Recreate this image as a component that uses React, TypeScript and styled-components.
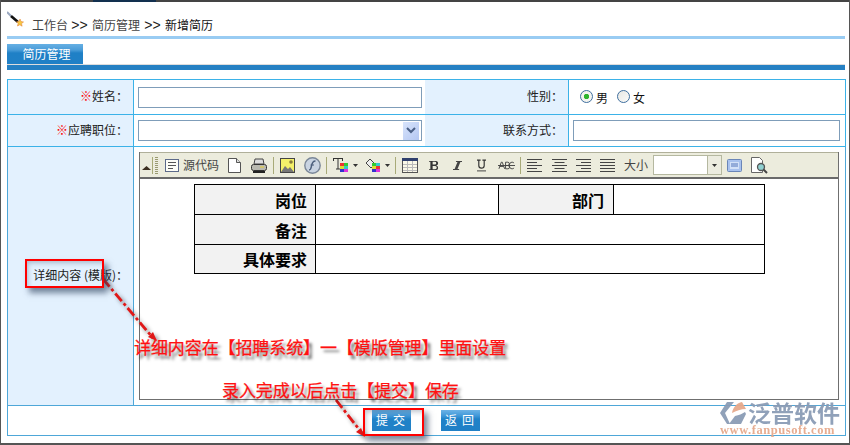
import React from "react";
import styled, { createGlobalStyle } from "styled-components";

const Global = createGlobalStyle`
  html, body { margin: 0; padding: 0; background: #fff; }
  body { font: 12px "Noto Sans CJK SC", "Liberation Sans", sans-serif; color: #222; }
  * { box-sizing: border-box; }
`;

const Frame = styled.div`
  position: relative; width: 850px; height: 445px; overflow: hidden; background: #fff;
  border-left: 1px solid #555; border-right: 1px solid #555; border-bottom: 2px solid #555;
`;
const TopStrip = styled.div`
  height: 2px; background: #444; margin: 0 -1px; padding-left: 93px;
`;
const TopTab = styled.div`width: 63px; height: 2px; background: #12304f;`;
const Content = styled.div`padding: 0 4px 0 6px;`;
const Crumbs = styled.div`
  height: 34px; display: flex; align-items: flex-end; padding-bottom: 2px; line-height: 18px; color: #444;
`;
const WandBox = styled.svg`width: 17px; height: 17px; margin: 0 8px 6px 0; flex: none;`;
const CrumbLink = styled.span<{ $cur?: boolean; $w: number }>`
  width: ${p => p.$w}px; white-space: nowrap; color: ${p => (p.$cur ? "#111" : "#444")};
`;
const CrumbSep = styled.span`
  width: 25px; text-align: center; color: #222; font-family: "Liberation Sans", sans-serif; font-size: 14px; line-height: 17px;
`;
const Rule = styled.div`height: 3px; background: #99ccf3;`;
const Tab = styled.div`
  width: 76px; height: 20px; margin-top: 5px; padding-left: 3px; color: #fff; text-align: center; line-height: 20px;
  background: linear-gradient(#66b0e4 0, #4a9cd8 6px, #1f80c6 9px, #2080c6 100%);
`;
const TabBar = styled.div`
  height: 6px; background: #2580c3; border-top: 1px solid #ddd; margin-bottom: 9px;
`;

const Form = styled.table`
  width: 838px; height: 357px; border-collapse: collapse; table-layout: fixed;
`;
const Row = styled.tr<{ $h: number }>`height: ${p => p.$h}px;`;
const Label = styled.td<{ $dark?: boolean }>`
  background: #e3f1fe; text-align: right; padding: 0 5px 3px 0; color: #222;
  border: 1px solid ${p => (p.$dark ? "#4ea7d8" : "#3bb2e8")};
`;
const Label2 = styled(Label)`border-left: 0;`;
const Field = styled.td<{ $dark?: boolean; $nr?: boolean }>`
  padding: 0 4px; background: #fff;
  border: 1px solid ${p => (p.$dark ? "#4ea7d8" : "#3bb2e8")};
  ${p => (p.$nr ? "border-right: 0;" : "")}
`;
const EditorCell = styled(Field)`padding: 5px 6px 5px 5px; vertical-align: top;`;
const Star = styled.span`color: #f00;`;
const TextInput = styled.div<{ $w: number }>`
  width: ${p => p.$w}px; height: 21px; border: 1px solid #7f9db9; background: #fff;
`;
const SelectBox = styled(TextInput)`display: flex; justify-content: flex-end; align-items: center; padding: 0 2px 0 0;`;
const SelectBtn = styled.div`
  width: 16px; height: 18px; background: linear-gradient(135deg, #d8e4fb, #b4c7f2); display: flex; align-items: center; justify-content: center;
`;
const RadioRow = styled.div`display: flex; align-items: center; padding: 0 0 1px 7px; color: #111;`;
const Radio = styled.span<{ $on?: boolean; $ml?: number }>`
  width: 13px; height: 13px; border-radius: 50%; border: 1px solid #3f6f9f; flex: none; margin-left: ${p => p.$ml || 0}px;
  background: ${p => (p.$on ? "radial-gradient(circle, #2fb52f 0 2.4px, #f4f4f0 3px)" : "linear-gradient(135deg, #e8e8e4, #fbfbf9)")};
`;
const RadioText = styled.span`margin-left: 3px; width: 11px; line-height: 14px; margin-top: 2px;`;

const Editor = styled.div`
  width: 700px; height: 248px; border: 1px solid #6f6f6f; border-top: 0;
`;
const Toolbar = styled.div`
  height: 27px; display: flex; align-items: center; background: #ececdd;
  border-top: 1px solid #b0b09a; border-bottom: 2px solid #6a6a6a; color: #444;
`;
const Slot = styled.span<{ $ml?: number; $w: number }>`
  flex: none; display: flex; align-items: center; justify-content: center;
  margin-left: ${p => p.$ml || 0}px; width: ${p => p.$w}px; white-space: nowrap; line-height: 16px;
`;
const Sep = styled.span<{ $ml: number }>`
  flex: none; width: 1px; height: 17px; background: #a8aa78; margin-left: ${p => p.$ml}px;
`;
const Grip = styled.span`
  flex: none; width: 3px; height: 17px; margin-left: 2px;
  background: repeating-linear-gradient(#9a9a70 0 1px, #ecece0 1px 2px);
`;
const ToolSelect = styled.span`
  flex: none; width: 69px; height: 20px; margin-left: 5px; background: #fff; border: 1px solid #b5b8a0;
  display: flex; justify-content: flex-end;
`;
const ToolSelectBtn = styled.span`
  width: 14px; background: #ecece0; border-left: 1px solid #b5b8a0; display: flex; align-items: center; justify-content: center;
`;
const Body = styled.div`padding: 5px 0 0 54px;`;
const Template = styled.table`
  width: 570px; border-collapse: collapse; table-layout: fixed;
  td { border: 1px solid #000; height: 30px; padding: 0; }
  tr:last-child td { height: 29px; }
`;
const Th = styled.td<{ $pad?: number }>`
  background: #f2f2f2; text-align: right; padding-right: ${p => p.$pad || 8}px !important;
  font-size: 16px; font-weight: 700; color: #000; line-height: 20px;
`;
const Actions = styled.div`display: flex; justify-content: center; gap: 30px; padding-right: 2px;`;
const Btn = styled.div`
  width: 39px; height: 21px; color: #fff; text-align: center; line-height: 19px; letter-spacing: 5px; padding-left: 4px;
  background: linear-gradient(#6db3e6 0, #3f97d8 6px, #2082c8 9px, #2080c6 100%);
`;

const Callout = styled.div<{ $x: number; $y: number; $w: number; $h: number }>`
  position: absolute; left: ${p => p.$x}px; top: ${p => p.$y}px; width: ${p => p.$w}px; height: ${p => p.$h}px;
  border: 2px solid #f00; box-shadow: 4px 5px 6px rgba(40, 60, 90, .6), inset 3px 4px 5px -2px rgba(40, 60, 90, .3);
`;
const Note = styled.div<{ $x: number; $y: number }>`
  position: absolute; left: ${p => p.$x}px; top: ${p => p.$y}px; white-space: nowrap;
  font-size: 17px; line-height: 20px; color: #f11; -webkit-text-stroke: .25px #f11; letter-spacing: -.09px;
  text-shadow: 3px 4px 3px rgba(0, 0, 0, .55);
`;
const Arrows = styled.svg`
  position: absolute; left: 0; top: 0; width: 850px; height: 445px; pointer-events: none;
  filter: drop-shadow(3px 3px 2px rgba(0,0,0,.45));
`;
const Watermark = styled.div`
  position: absolute; left: 719px; top: 400px; width: 124px; pointer-events: none; opacity: .95;
`;
const BrandRow = styled.div`display: flex; align-items: center; height: 25px;`;
const BrandLogo = styled.svg`width: 27px; height: 24px; flex: none;`;
const BrandName = styled.span`
  font-size: 23px; line-height: 25px; font-weight: 700; color: #8b9cb6; letter-spacing: 0; white-space: nowrap; margin-left: 1px;
`;
const BrandUrl = styled.div`
  font: bold 12.5px/11px "Liberation Serif", serif; color: #e6a98c; letter-spacing: .55px; white-space: nowrap;
`;

const Lines = ({ n, kind }: { n: number; kind: "l" | "c" | "r" | "j" }) => {
  const rows = [15, 10, 15, 10, 15].slice(0, n);
  return (
    <svg width="15" height="13" viewBox="0 0 15 13">
      {rows.map((w, i) => {
        const ww = kind === "j" ? 15 : w;
        const x = kind === "l" || kind === "j" ? 0 : kind === "c" ? (15 - ww) / 2 : 15 - ww;
        return <rect key={i} x={x} y={i * 3} width={ww} height="1" fill="#444" />;
      })}
    </svg>
  );
};
const Caret = () => (
  <svg width="5" height="3" viewBox="0 0 5 3"><path d="M0 0h5L2.5 3z" fill="#333" /></svg>
);

export default function App() {
  return (
    <Frame>
      <Global />
      <TopStrip><TopTab /></TopStrip>
      <Content>
        <Crumbs>
          <WandBox viewBox="0 0 17 17">
            <path d="M0 1l4 4" stroke="#9aa8c0" strokeWidth="2" />
            <path d="M4 5l7 6" stroke="#111" strokeWidth="2.600" />
            <path d="M13 8l1 2.500 2.500.5-2 1.600.6 2.600-2.300-1.400-2.300 1.200.6-2.600-1.600-1.600 2.500-.3z" fill="#f5c842" stroke="#e8873a" strokeWidth=".6" />
          </WandBox>
          <CrumbLink $w={35}>工作台</CrumbLink>
          <CrumbSep>&gt;&gt;</CrumbSep>
          <CrumbLink $w={48}>简历管理</CrumbLink>
          <CrumbSep>&gt;&gt;</CrumbSep>
          <CrumbLink $cur $w={48}>新增简历</CrumbLink>
        </Crumbs>
        <Rule />
        <Tab>简历管理</Tab>
        <TabBar />
        <Form>
          <colgroup>
            <col width="126" /><col width="291" /><col width="144" /><col width="277" />
          </colgroup>
          <tbody>
            <Row $h={35}>
              <Label><Star>※</Star>姓名：</Label>
              <Field $nr><TextInput $w={284} /></Field>
              <Label2>性别：</Label2>
              <Field>
                <RadioRow>
                  <Radio $on /><RadioText>男</RadioText>
                  <Radio $ml={10} /><RadioText>女</RadioText>
                </RadioRow>
              </Field>
            </Row>
            <Row $h={32}>
              <Label><Star>※</Star>应聘职位：</Label>
              <Field $nr>
                <SelectBox $w={284}>
                  <SelectBtn>
                    <svg width="10" height="7" viewBox="0 0 10 7"><path d="M1 1l4 4 4-4" fill="none" stroke="#4a5f85" strokeWidth="2" /></svg>
                  </SelectBtn>
                </SelectBox>
              </Field>
              <Label2>联系方式：</Label2>
              <Field><TextInput $w={267} /></Field>
            </Row>
            <Row $h={259}>
              <Label $dark>详细内容 (模版)：</Label>
              <EditorCell $dark colSpan={3}>
                <Editor>
                  <Toolbar>
                    <Slot $w={12}>
                      <svg width="9" height="12" viewBox="0 0 9 12"><path d="M0 11l4.500-4 4.500 4z" fill="#3c2f20" /></svg>
                    </Slot>
                    <Sep $ml={0} />
                    <Grip />
                    <Slot $ml={7} $w={14}>
                      <svg width="14" height="13" viewBox="0 0 14 13"><rect x=".5" y=".5" width="13" height="12" fill="#fdfdf6" stroke="#5c6a8a" /><path d="M3 3.500h8M3 6.500h8M3 9.500h5" stroke="#555" /></svg>
                    </Slot>
                    <Slot $ml={4} $w={36}>源代码</Slot>
                    <Slot $ml={9} $w={13}>
                      <svg width="13" height="15" viewBox="0 0 13 15"><path d="M.5.500h8l4 4v10H.5z" fill="#fff" stroke="#555" /><path d="M8.500.500v4h4" fill="#ddd" stroke="#555" /></svg>
                    </Slot>
                    <Slot $ml={10} $w={16}>
                      <svg width="16" height="15" viewBox="0 0 16 15"><path d="M4 1h8l1 5H3z" fill="#ddd" stroke="#444" /><rect x=".5" y="6.500" width="15" height="6" rx="2" fill="#b9b9b0" stroke="#333" /><path d="M2 14h12" stroke="#222" strokeWidth="2" /><path d="M9 9h4" stroke="#e8d030" /></svg>
                    </Slot>
                    <Sep $ml={6} />
                    <Slot $ml={6} $w={15}>
                      <svg width="15" height="15" viewBox="0 0 15 15"><rect x=".5" y=".5" width="14" height="14" fill="#f4f06a" stroke="#444" /><path d="M1 14l4-6 3 3 2-2 4 5z" fill="#777" /><circle cx="11" cy="4" r="1.800" fill="#8a7c3a" /></svg>
                    </Slot>
                    <Slot $ml={9} $w={17}>
                      <svg width="17" height="17" viewBox="0 0 17 17"><circle cx="8.500" cy="8.500" r="7.700" fill="#c9d4e2" stroke="#7a8798" strokeWidth="1.400" /><path d="M11.500 4C8.500 4 8 6 7.500 9S6 13 5 13" fill="none" stroke="#4c5f7c" strokeWidth="1.500" /><path d="M6.500 8h3.500" stroke="#4c5f7c" /></svg>
                    </Slot>
                    <Sep $ml={5} />
                    <Slot $ml={6} $w={16}>
                      <svg width="16" height="15" viewBox="0 0 16 15"><path d="M0 .5h10M5 1v10M3 11h4M.5 1v2M9.500 1v2" stroke="#333" fill="none" /><rect x="7" y="5" width="4" height="3" fill="#e33" /><rect x="11" y="5" width="4" height="3" fill="#3c3" /><rect x="7" y="8" width="4" height="3" fill="#dd3" /><rect x="11" y="8" width="4" height="3" fill="#3cc" /><rect x="7" y="11" width="4" height="3" fill="#33c" /><rect x="11" y="11" width="4" height="3" fill="#d3d" /></svg>
                    </Slot>
                    <Slot $ml={4} $w={5}><Caret /></Slot>
                    <Slot $ml={7} $w={16}>
                      <svg width="16" height="15" viewBox="0 0 16 15"><path d="M5 1l5 5-4 4-5-5z" fill="#eee" stroke="#444" /><rect x="7" y="5" width="4" height="3" fill="#3c3" /><rect x="11" y="5" width="4" height="3" fill="#3cc" /><rect x="7" y="8" width="4" height="3" fill="#dd3" /><rect x="11" y="8" width="4" height="3" fill="#e33" /><rect x="7" y="11" width="4" height="3" fill="#33c" /><rect x="11" y="11" width="4" height="3" fill="#d3d" /></svg>
                    </Slot>
                    <Slot $ml={4} $w={5}><Caret /></Slot>
                    <Sep $ml={5} />
                    <Slot $ml={6} $w={16}>
                      <svg width="16" height="15" viewBox="0 0 16 15"><rect x=".5" y=".5" width="15" height="14" fill="#fbf9e8" stroke="#555" /><rect x="0" y="0" width="16" height="3" fill="#30406e" /><path d="M1 6.500h14M1 9.500h14M1 12.500h14M5.500 3v11M10.500 3v11" stroke="#bbb" /></svg>
                    </Slot>
                    <Slot $ml={11} $w={10}>
                      <svg width="11" height="11" viewBox="0 0 11 11"><path d="M0 .5h7a2.500 2.500 0 0 1 1 5 2.500 2.500 0 0 1-1 5H0v-1h1.500V1.500H0zM4 1.500v3h2.500a1.500 1.500 0 0 0 0-3zM4 6v3.500h2.800a1.700 1.700 0 0 0 0-3.500z" fill="#333" fillRule="evenodd" /></svg>
                    </Slot>
                    <Slot $ml={14} $w={9}>
                      <svg width="10" height="11" viewBox="0 0 10 11"><path d="M3.500.500H10v1H8.200L5 9.500h1.800v1H0v-1h1.800L5 1.500H3.200z" fill="#444" /></svg>
                    </Slot>
                    <Slot $ml={15} $w={9}>
                      <svg width="10" height="13" viewBox="0 0 10 13"><path d="M2 .500v6a3 3 0 0 0 6 0v-6M0 .5h4M6 .5h4" fill="none" stroke="#333" strokeWidth="1.300" /><path d="M0 12.500h10" stroke="#333" /></svg>
                    </Slot>
                    <Slot $ml={12} $w={17}>
                      <svg width="18" height="9" viewBox="0 0 18 9"><path d="M1 8l2.500-7h1L7 8M2 5.500h4M8 1v7h2.500a1.700 1.700 0 0 0 0-3.500H8h2.300a1.600 1.600 0 0 0 0-3.500zM17 2a2.500 2.500 0 0 0-2-1c-2 0-3 1.500-3 3.500s1 3.500 3 3.500a2.500 2.500 0 0 0 2-1" fill="none" stroke="#444" /><path d="M0 4.500h18" stroke="#444" /></svg>
                    </Slot>
                    <Sep $ml={5} />
                    <Slot $ml={6} $w={15}><Lines n={5} kind="l" /></Slot>
                    <Slot $ml={10} $w={15}><Lines n={5} kind="c" /></Slot>
                    <Slot $ml={9} $w={15}><Lines n={5} kind="r" /></Slot>
                    <Slot $ml={9} $w={15}><Lines n={5} kind="j" /></Slot>
                    <Slot $ml={9} $w={24}>大小</Slot>
                    <ToolSelect>
                      <ToolSelectBtn><Caret /></ToolSelectBtn>
                    </ToolSelect>
                    <Slot $ml={5} $w={15}>
                      <svg width="15" height="13" viewBox="0 0 15 13"><rect x=".5" y=".5" width="14" height="12" rx="1" fill="#a9c2ee" stroke="#6a86b8" /><rect x="3" y="3" width="9" height="7" fill="#d3e1f8" /><path d="M4 5h7M4 7h7" stroke="#5577bb" /></svg>
                    </Slot>
                    <Slot $ml={9} $w={17}>
                      <svg width="17" height="17" viewBox="0 0 17 17"><path d="M.5.500h8l3 3v12H.5z" fill="#fff" stroke="#666" /><circle cx="10" cy="10" r="3.500" fill="#8fd0d0" stroke="#555" strokeWidth="1.300" /><path d="M12.500 12.500l3.500 3.500" stroke="#444" strokeWidth="2" /></svg>
                    </Slot>
                  </Toolbar>
                  <Body>
                    <Template>
                      <colgroup>
                        <col width="121" /><col width="183" /><col width="115" /><col width="151" />
                      </colgroup>
                      <tbody>
                        <tr><Th>岗位</Th><td /><Th $pad={9}>部门</Th><td /></tr>
                        <tr><Th>备注</Th><td colSpan={3} /></tr>
                        <tr><Th>具体要求</Th><td colSpan={3} /></tr>
                      </tbody>
                    </Template>
                  </Body>
                </Editor>
              </EditorCell>
            </Row>
            <Row $h={30}>
              <Field $dark colSpan={4}>
                <Actions><Btn>提交</Btn><Btn>返回</Btn></Actions>
              </Field>
            </Row>
          </tbody>
        </Form>
      </Content>

      <Arrows viewBox="0 0 850 445">
        <path d="M102 279L152 338" stroke="#e01818" strokeWidth="2.800" strokeDasharray="10 3 3 3" fill="none" />
        <path d="M156 341l-9-4 5-5z" fill="#e01818" />
        <path d="M335 400L361 433" stroke="#e01818" strokeWidth="2.800" strokeDasharray="10 3 3 3" fill="none" />
        <path d="M364 437l-9-5 5-4z" fill="#e01818" />
      </Arrows>
      <Callout $x={24} $y={259} $w={79} $h={29} />
      <Callout $x={362} $y={408} $w={61} $h={28} />
      <Note $x={133} $y={337}>详细内容在【招聘系统】一【模版管理】里面设置</Note>
      <Note $x={221} $y={380}>录入完成以后点击【提交】保存</Note>
      <Watermark>
        <BrandRow>
          <BrandLogo viewBox="0 0 27 24">
            <path d="M7 1h7L5 12l5 11H7L0 12z" fill="#8b9cb6" />
            <path d="M12 12C13 6 17 2 22 1l4 7c-5 0-10 2-14 4z" fill="#e6a98c" />
            <path d="M9 23l6-8c4-1 7-2 10-4l1 2-5 10z" fill="#8b9cb6" />
          </BrandLogo>
          <BrandName>泛普软件</BrandName>
        </BrandRow>
        <BrandUrl>www.fanpusoft.com</BrandUrl>
      </Watermark>
    </Frame>
  );
}
